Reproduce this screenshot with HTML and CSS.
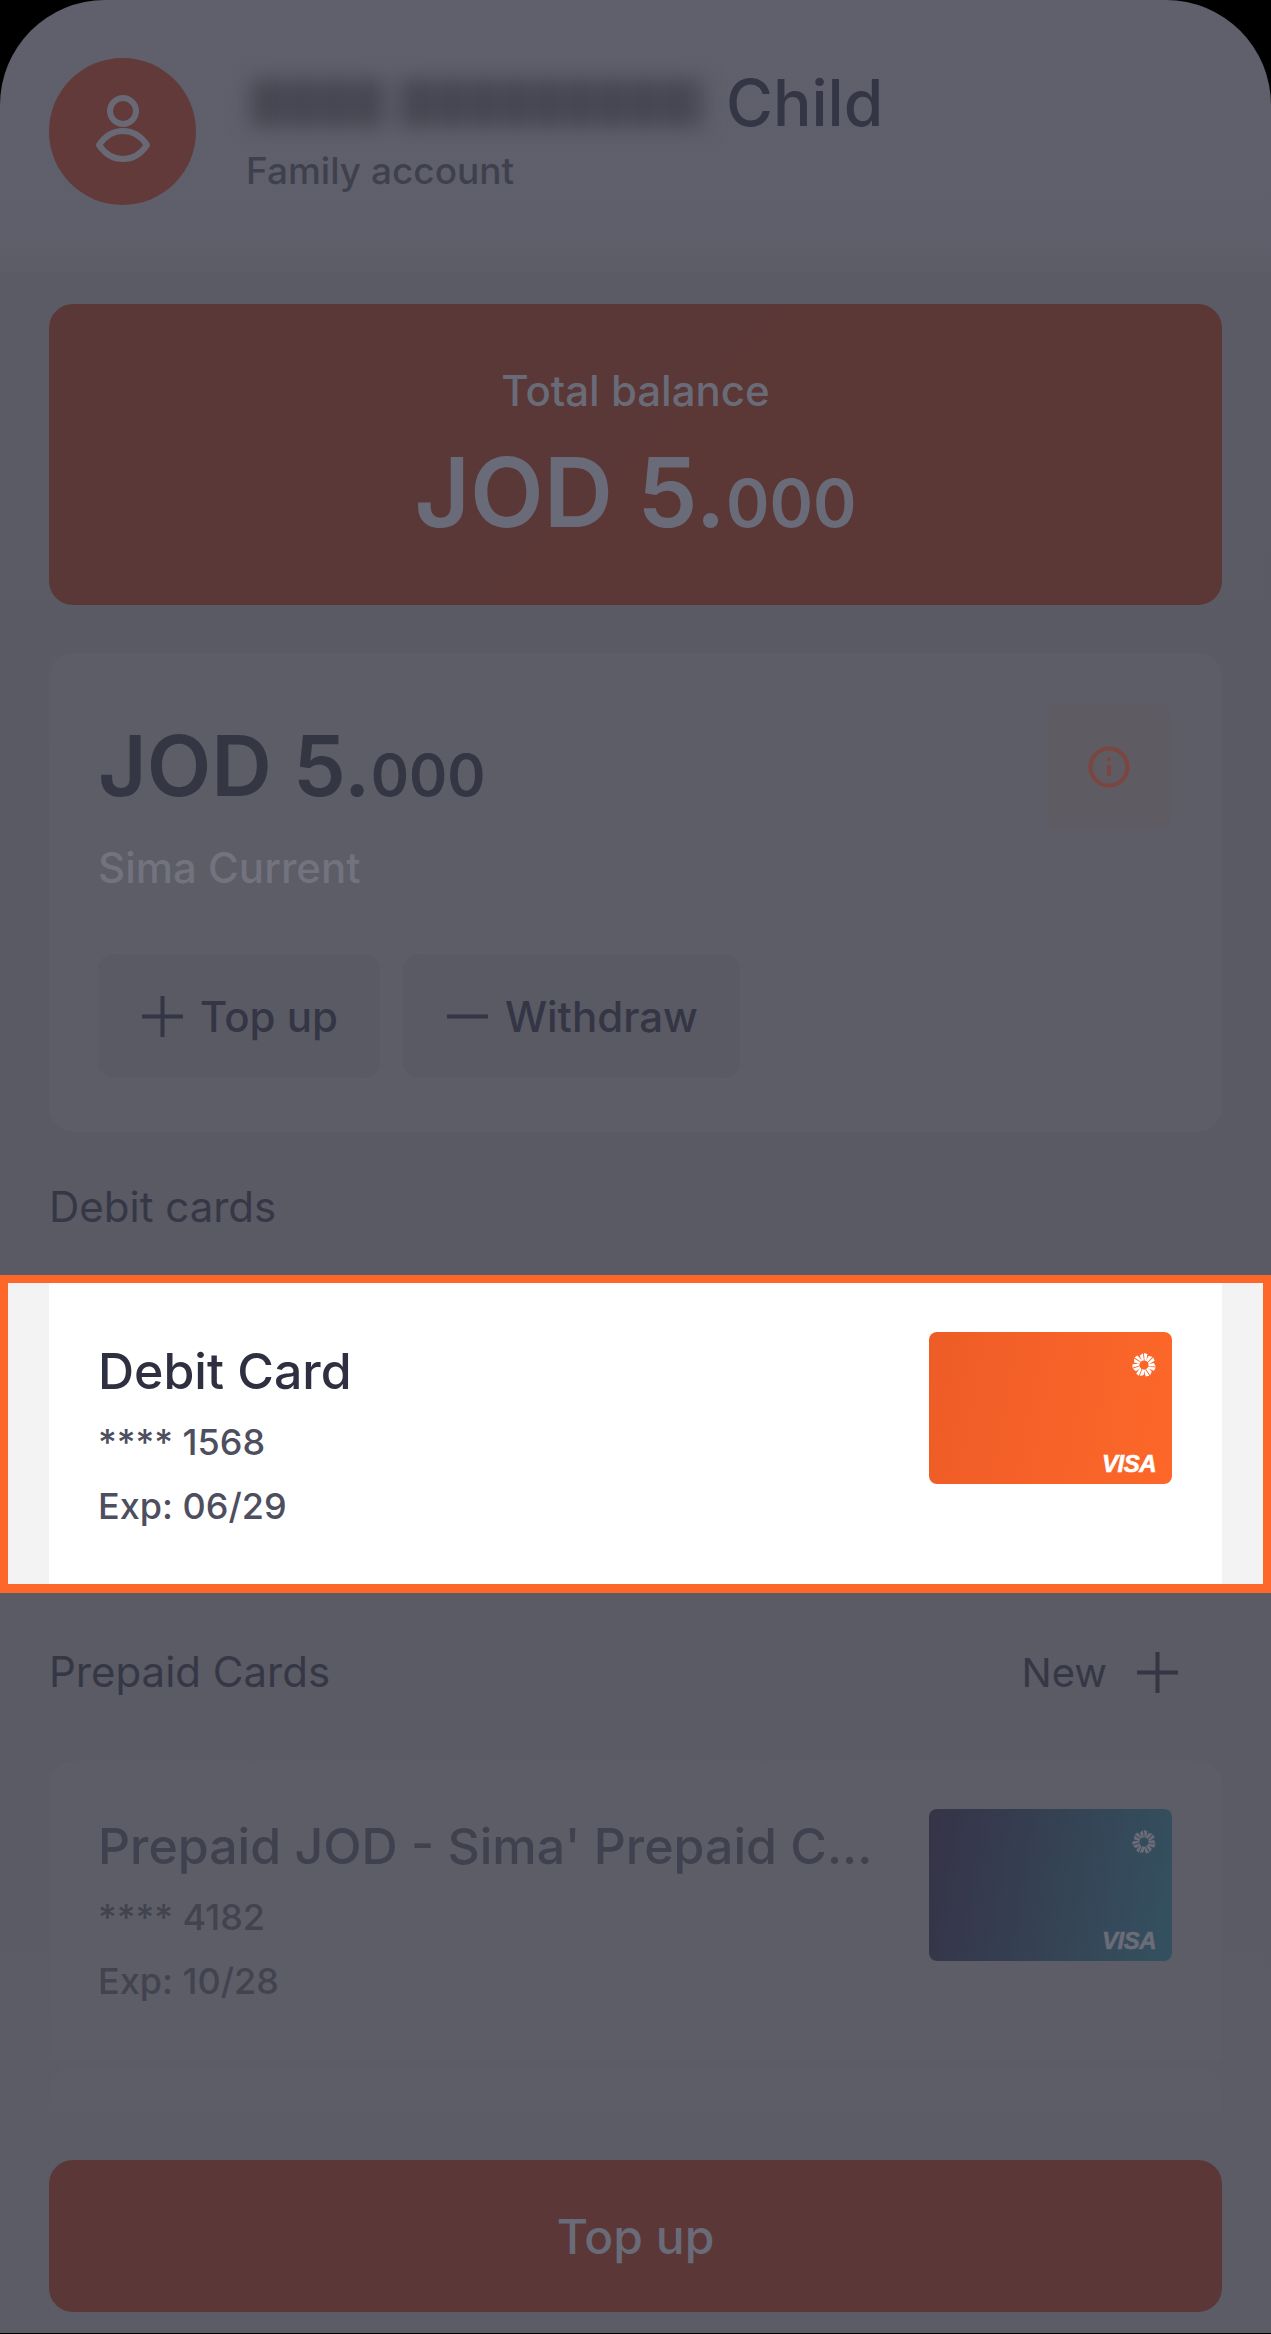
FILE: index.html
```html
<!DOCTYPE html>
<html lang="en">
<head>
  <meta charset="UTF-8">
  <meta name="viewport" content="width=device-width, initial-scale=1.0">
  <title>Child account</title>
  <link rel="stylesheet" href="styles.css">
</head>
<body>
  <svg class="defs" width="0" height="0">
    <defs>
      <path id="petal" d="M10.9 8.8L8.8 3.8 11.9 1.2 12.9 8.4ZM13.6 8.4L12.9 1 16.4 2 15.3 8.9Z"></path>
      <g id="flower">
        <use href="#petal"></use>
        <use href="#petal" transform="rotate(51.4 13 13)"></use>
        <use href="#petal" transform="rotate(102.8 13 13)"></use>
        <use href="#petal" transform="rotate(154.2 13 13)"></use>
        <use href="#petal" transform="rotate(205.6 13 13)"></use>
        <use href="#petal" transform="rotate(257 13 13)"></use>
        <use href="#petal" transform="rotate(308.4 13 13)"></use>
      </g>
    </defs>
  </svg>
  <div class="screen">
    <!-- Profile -->
    <div class="profile">
      <div class="avatar">
        <svg width="60" height="90" viewBox="0 0 60 90" fill="none" stroke="#686975" stroke-width="6">
          <circle cx="30" cy="24" r="13"></circle>
          <path d="M6 58C12 49 20 44 30 44S48 49 54 58C48 67 40 72 30 72S12 67 6 58Z" stroke-linejoin="round"></path>
        </svg>
      </div>
      <div class="profile-text">
        <div class="profile-name"><span class="blurred"><i></i><i></i></span> Child</div>
        <div class="profile-type">Family account</div>
      </div>
    </div>

    <!-- Total balance -->
    <div class="balance">
      <div class="balance-label">Total balance</div>
      <div class="balance-amount">JOD 5.<small>000</small></div>
    </div>

    <!-- Current account -->
    <div class="account">
      <div class="account-top">
        <div>
          <div class="account-amount">JOD 5.<small>000</small></div>
          <div class="account-name">Sima Current</div>
        </div>
        <div class="info-btn">
          <svg width="44" height="44" viewBox="0 0 44 44" fill="none" stroke="#7c4540" stroke-width="4">
            <circle cx="22" cy="22" r="18.5"></circle>
            <path d="M22 20V31"></path>
            <path d="M22 12.5V16"></path>
          </svg>
        </div>
      </div>
      <div class="account-actions">
        <div class="action-btn">
          <svg class="sign" width="41" height="41" viewBox="0 0 41 41"><path d="M0 20.5H41M20.5 0V41"></path></svg>
          Top up
        </div>
        <div class="action-btn">
          <svg class="sign" width="41" height="41" viewBox="0 0 41 41"><path d="M0 20.5H41"></path></svg>
          Withdraw
        </div>
      </div>
    </div>

    <div class="section-title debit-title">Debit cards</div>

    <!-- Highlighted card -->
    <div class="highlight">
      <div class="card-row">
        <div class="card-text">
          <div class="card-name">Debit Card</div>
          <div class="card-number">**** 1568</div>
          <div class="card-exp">Exp: 06/29</div>
        </div>
        <div class="card-thumb thumb-orange">
          <svg class="flower" width="26" height="26" viewBox="0 0 26 26"><use href="#flower"></use></svg>
          <span class="visa">VISA</span>
        </div>
      </div>
    </div>

    <div class="section-head">
      <div class="section-title">Prepaid Cards</div>
      <div class="new-link">New
        <svg class="sign" width="41" height="41" viewBox="0 0 41 41"><path d="M0 20.5H41M20.5 0V41"></path></svg>
      </div>
    </div>

    <!-- Prepaid list, cut off above the button -->
    <div class="prepaid-list">
      <div class="prepaid-card">
        <div class="card-text">
          <div class="card-name">Prepaid JOD - Sima' Prepaid C...</div>
          <div class="card-number">**** 4182</div>
          <div class="card-exp">Exp: 10/28</div>
        </div>
        <div class="card-thumb thumb-dark">
          <svg class="flower" width="26" height="26" viewBox="0 0 26 26"><use href="#flower"></use></svg>
          <span class="visa">VISA</span>
        </div>
      </div>
      <div class="prepaid-card"></div>
    </div>

    <div class="main-btn">Top up</div>
  </div>
</body>
</html>
```

FILE: styles.css
```css
* {
  box-sizing: border-box;
}
html, body {
  margin: 0;
  background: #000;
}
body {
  font-family: Inter, "Noto Sans", sans-serif;
  width: 1271px;
  height: 2334px;
  overflow: hidden;
}
.defs {
  display: block;
  height: 0;
}
.screen {
  height: 2333px;
  background: linear-gradient(#5f606b, #5e5f6a 240px, #5a5b64 280px, #595a63 1200px, #5a5b64 1700px, #5b5c66);
  border-radius: 105px 105px 0 0;
  overflow: hidden;
  padding-top: 58px;
}
/* Profile */
.profile {
  display: flex;
  margin: 0 49px;
  height: 147px;
}
.avatar {
  width: 147px;
  height: 147px;
  border-radius: 50%;
  background: #613a39;
  display: flex;
  align-items: center;
  justify-content: center;
}
.profile-text {
  margin-left: 50px;
}
.profile-name {
  font-size: 64px;
  font-weight: 500;
  line-height: 70px;
  margin-top: 10px;
  color: #343545;
  display: flex;
  align-items: center;
  gap: 22px;
  margin-left: 4px;
}
.blurred {
  display: flex;
  gap: 14px;
  filter: blur(10px);
}
.blurred i {
  display: block;
  height: 48px;
  background: repeating-linear-gradient(90deg, #464752 0 12px, #50515b 12px 16px, #40414c 16px 28px, #52535d 28px 32px);
}
.blurred i:first-child {
  width: 135px;
}
.blurred i:last-child {
  width: 305px;
}
.profile-type {
  font-size: 37px;
  font-weight: 500;
  color: #3f404e;
  margin-top: 10px;
  line-height: 46px;
}
/* Total balance */
.balance {
  margin: 99px 49px 0;
  height: 301px;
  border-radius: 24px;
  background: linear-gradient(136deg, #5a3837 50%, #5b3736 50%);
  text-align: center;
  color: #6a6b78;
  padding-top: 62px;
}
.balance-label {
  font-size: 42px;
  font-weight: 500;
  line-height: 50px;
}
.balance-amount {
  font-size: 96px;
  font-weight: 600;
  line-height: 110px;
  margin-top: 21px;
}
.balance-amount small {
  font-size: 66px;
}
/* Account */
.account {
  margin: 48px 49px 0;
  height: 479px;
  border-radius: 24px;
  background: #5c5d67;
  padding: 50px 52px 0 49px;
}
.account-top {
  display: flex;
  justify-content: space-between;
}
.account-amount {
  font-size: 84px;
  font-weight: 600;
  line-height: 100px;
  margin-top: 13px;
  color: #353644;
}
.account-amount small {
  font-size: 58px;
}
.account-name {
  font-size: 42px;
  font-weight: 500;
  color: #72737f;
  margin-top: 18px;
  line-height: 50px;
}
.info-btn {
  width: 123px;
  height: 127px;
  border-radius: 12px;
  background: #5e5b63;
  display: flex;
  align-items: center;
  justify-content: center;
}
.account-actions {
  display: flex;
  gap: 23px;
  margin-top: 61px;
}
.action-btn {
  height: 124px;
  border-radius: 16px;
  background: #595a63;
  padding: 0 42px 0 44px;
  display: flex;
  align-items: center;
  gap: 17px;
  font-size: 42px;
  font-weight: 500;
  color: #343545;
}
.sign {
  fill: none;
  stroke: #343545;
  stroke-width: 4;
}
/* Section headers */
.section-title {
  font-size: 42px;
  font-weight: 400;
  line-height: 50px;
  color: #363746;
}
.debit-title {
  margin: 50px 49px 0;
}
.section-head {
  display: flex;
  justify-content: space-between;
  align-items: center;
  margin: 54px 49px 0;
}
.new-link {
  display: flex;
  align-items: center;
  gap: 30px;
  font-size: 40px;
  font-weight: 400;
  color: #363746;
  margin-right: 44px;
  height: 50px;
}
/* Highlighted card */
.highlight {
  margin-top: 43px;
  height: 318px;
  border: solid #fd6729;
  border-width: 8px 8px 9px;
  background: #f3f3f3;
  padding: 0 41px;
}
.card-row {
  height: 100%;
  background: #fff;
  display: flex;
  justify-content: space-between;
  padding: 49px 50px 0 49px;
}
.card-text {
  flex: 1;
}
.card-name {
  font-size: 50px;
  font-weight: 500;
  line-height: 56px;
  color: #2e2f40;
  margin-top: 11px;
}
.card-number {
  font-size: 36px;
  font-weight: 500;
  color: #4d4e5e;
  line-height: 44px;
  margin-top: 21px;
}
.card-exp {
  font-size: 36px;
  font-weight: 500;
  color: #4d4e5e;
  line-height: 44px;
  margin-top: 20px;
}
.card-thumb {
  position: relative;
  width: 243px;
  height: 152px;
  border-radius: 8px;
  flex-shrink: 0;
}
.thumb-orange {
  background: linear-gradient(100deg, #ee5c27, #fd6729);
  color: #fff;
  fill: #fff;
}
.thumb-dark {
  background: linear-gradient(100deg, #363348, #345160);
  color: #6b6c78;
  fill: #6b6c78;
}
.flower {
  position: absolute;
  top: 20px;
  right: 15px;
}
.visa {
  position: absolute;
  right: 16px;
  bottom: 6px;
  font-family: "Liberation Sans", sans-serif;
  font-size: 24px;
  font-weight: 700;
  font-style: italic;
  letter-spacing: -.5px;
  -webkit-text-stroke: .6px currentColor;
}
/* Prepaid list */
.prepaid-list {
  margin: 64px 49px 0;
  height: 350px;
  overflow: hidden;
}
.prepaid-card {
  height: 301px;
  border-radius: 24px 24px 0 0;
  background: #5c5d67;
  display: flex;
  padding: 48px 50px 0 49px;
  margin-bottom: 4px;
}
.prepaid-card .card-name {
  color: #40414f;
  margin-top: 9px;
  white-space: nowrap;
}
.prepaid-card .card-number,
.prepaid-card .card-exp {
  color: #42434f;
}
/* Bottom button */
.main-btn {
  margin: 49px 49px 0;
  height: 152px;
  border-radius: 24px;
  background: #5b3837;
  color: #6a6b78;
  font-size: 48px;
  font-weight: 500;
  display: flex;
  align-items: center;
  justify-content: center;
}
```
